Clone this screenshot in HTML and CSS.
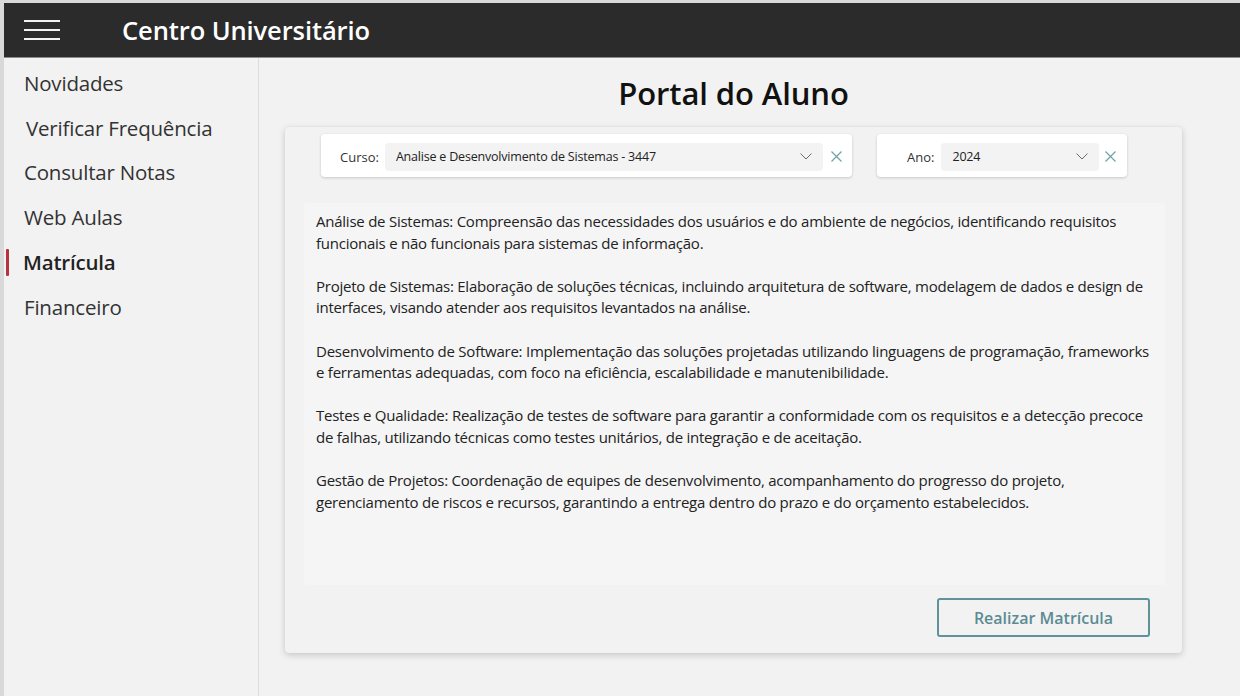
FILE: index.html
```html
<!DOCTYPE html>
<html lang="pt-BR">
<head>
<meta charset="utf-8">
<title>Centro Universitário - Portal do Aluno</title>
<link rel="stylesheet" href="styles.css">
</head>
<body>
<div class="window">
  <header class="topbar">
    <button class="burger" aria-label="Menu">
      <span></span><span></span><span></span>
    </button>
    <h1 class="brand">Centro Universitário</h1>
  </header>
  <div class="body">
    <nav class="sidebar">
      <a class="nav-item">Novidades</a>
      <a class="nav-item nav-shift">Verificar Frequência</a>
      <a class="nav-item">Consultar Notas</a>
      <a class="nav-item">Web Aulas</a>
      <a class="nav-item active">Matrícula</a>
      <a class="nav-item">Financeiro</a>
    </nav>
    <main class="main">
      <h2 class="page-title">Portal do Aluno</h2>
      <section class="card">
        <div class="filters">
          <div class="combo combo-curso">
            <span class="combo-label">Curso:</span>
            <div class="combo-field">
              <span class="combo-value">Analise e Desenvolvimento de Sistemas - 3447</span>
              <svg class="chev" width="12" height="7" viewBox="0 0 12 7"><path d="M0.5 0.5 L6 6 L11.5 0.5" fill="none" stroke="#6b6b6b" stroke-width="1"/></svg>
            </div>
            <svg class="clear" width="11" height="11" viewBox="0 0 11 11"><path d="M0.5 0.5 L10.5 10.5 M10.5 0.5 L0.5 10.5" stroke="#6ea3a3" stroke-width="1.2"/></svg>
          </div>
          <div class="combo combo-ano">
            <span class="combo-label">Ano:</span>
            <div class="combo-field">
              <span class="combo-value">2024</span>
              <svg class="chev" width="12" height="7" viewBox="0 0 12 7"><path d="M0.5 0.5 L6 6 L11.5 0.5" fill="none" stroke="#6b6b6b" stroke-width="1"/></svg>
            </div>
            <svg class="clear" width="11" height="11" viewBox="0 0 11 11"><path d="M0.5 0.5 L10.5 10.5 M10.5 0.5 L0.5 10.5" stroke="#6ea3a3" stroke-width="1.2"/></svg>
          </div>
        </div>
        <div class="description">
          <p>Análise de Sistemas: Compreensão das necessidades dos usuários e do ambiente de negócios, identificando requisitos funcionais e não funcionais para sistemas de informação.</p>
          <p>Projeto de Sistemas: Elaboração de soluções técnicas, incluindo arquitetura de software, modelagem de dados e design de interfaces, visando atender aos requisitos levantados na análise.</p>
          <p>Desenvolvimento de Software: Implementação das soluções projetadas utilizando linguagens de programação, frameworks e ferramentas adequadas, com foco na eficiência, escalabilidade e manutenibilidade.</p>
          <p>Testes e Qualidade: Realização de testes de software para garantir a conformidade com os requisitos e a detecção precoce de falhas, utilizando técnicas como testes unitários, de integração e de aceitação.</p>
          <p>Gestão de Projetos: Coordenação de equipes de desenvolvimento, acompanhamento do progresso do projeto, gerenciamento de riscos e recursos, garantindo a entrega dentro do prazo e do orçamento estabelecidos.</p>
        </div>
        <div class="actions">
          <button class="btn-outline">Realizar Matrícula</button>
        </div>
      </section>
    </main>
  </div>
</div>
</body>
</html>
```
FILE: styles.css
```css
* { box-sizing: border-box; }
html, body { height: 100%; }
body {
  margin: 0;
  padding: 3px 0 0 4px;
  background: #d9d9d9;
  font-family: "Open Sans", "Noto Sans", "Liberation Sans", sans-serif;
  color: #222;
  overflow: hidden;
}
.window {
  height: 100%;
  display: flex;
  flex-direction: column;
  background: #f2f2f2;
}
.topbar {
  height: 55px;
  flex: none;
  background: #2b2b2b;
  border-bottom: 1px solid #8c8c8c;
  display: flex;
  align-items: center;
}
.burger {
  width: 36px;
  height: 20px;
  margin-left: 20px;
  padding: 0;
  background: none;
  border: 0;
  display: flex;
  flex-direction: column;
  justify-content: space-between;
}
.burger span {
  display: block;
  height: 2px;
  width: 36px;
  background: #f2f2f2;
}
.brand {
  margin: 0 0 0 62px;
  color: #fff;
  font-size: 25.5px;
  font-weight: 600;
  letter-spacing: -0.1px;
}
.body {
  flex: 1;
  display: flex;
  min-height: 0;
}
.sidebar {
  width: 255px;
  flex: none;
  border-right: 1px solid #dcdcdc;
  padding-top: 2.5px;
  display: flex;
  flex-direction: column;
}
.nav-item {
  position: relative;
  height: 44.8px;
  display: flex;
  align-items: center;
  padding-left: 20px;
  font-size: 20.5px;
  color: #333;
  letter-spacing: -0.2px;
}
.nav-shift { padding-left: 22px; }
.nav-item.active {
  font-weight: 600;
  color: #222;
  padding-left: 19px;
}
.nav-item.active::before {
  content: "";
  position: absolute;
  left: 2px;
  top: 9px;
  width: 3px;
  height: 27px;
  background: #b5333a;
  border-radius: 1px;
}
.main {
  flex: 1;
  padding: 0 58px 0 26px;
  display: flex;
  flex-direction: column;
}
.page-title {
  margin: 14px 0 0;
  height: 55px;
  text-align: center;
  font-size: 31px;
  font-weight: 600;
  color: #111;
  letter-spacing: -0.1px;
}
.card {
  height: 526px;
  background: #f2f2f2;
  border-radius: 4px;
  box-shadow: 0 2px 7px rgba(0, 0, 0, 0.18), 0 0 1px rgba(0,0,0,0.08);
  padding: 7px 17px 16px 19px;
  display: flex;
  flex-direction: column;
}
.filters {
  display: flex;
  gap: 25px;
  padding-left: 17px;
  height: 43px;
}
.combo {
  height: 43px;
  background: #fff;
  border-radius: 4px;
  box-shadow: 0 1px 3px rgba(0, 0, 0, 0.18);
  display: flex;
  align-items: center;
  font-size: 13px;
  padding-top: 2px;
}
.combo-curso { width: 531px; padding-left: 19px; }
.combo-ano { width: 250px; padding-left: 30px; }
.combo-label {
  color: #333;
  margin-right: 7px;
}
.combo-curso .combo-label { margin-right: 6px; }
.combo-field {
  height: 28px;
  background: #f3f3f3;
  border-radius: 4px;
  display: flex;
  align-items: center;
  padding: 0 11px;
  justify-content: space-between;
}
.combo-curso .combo-field { width: 438px; }
.combo-ano .combo-field { width: 158px; }
.combo-value {
  font-size: 12.5px;
  color: #222;
  letter-spacing: -0.2px;
}
.clear { margin-left: 8px; }
.combo-ano .clear { margin-left: 6px; }
.description {
  margin-top: 26px;
  height: 382px;
  background: #f5f5f5;
  border-radius: 2px;
  padding: 8px 8px 7px 12px;
  font-size: 15px;
  line-height: 21.6px;
  color: #222;
  letter-spacing: -0.24px;
}
.description p { margin: 0 0 21.6px; }
.actions {
  display: flex;
  justify-content: flex-end;
  padding-right: 15px;
  margin-top: 13px;
}
.btn-outline {
  width: 213px;
  height: 39px;
  background: transparent;
  border: 2px solid #5f9399;
  border-radius: 3px;
  color: #5b8b92;
  font-family: inherit;
  font-size: 16px;
  font-weight: 600;
}
```
